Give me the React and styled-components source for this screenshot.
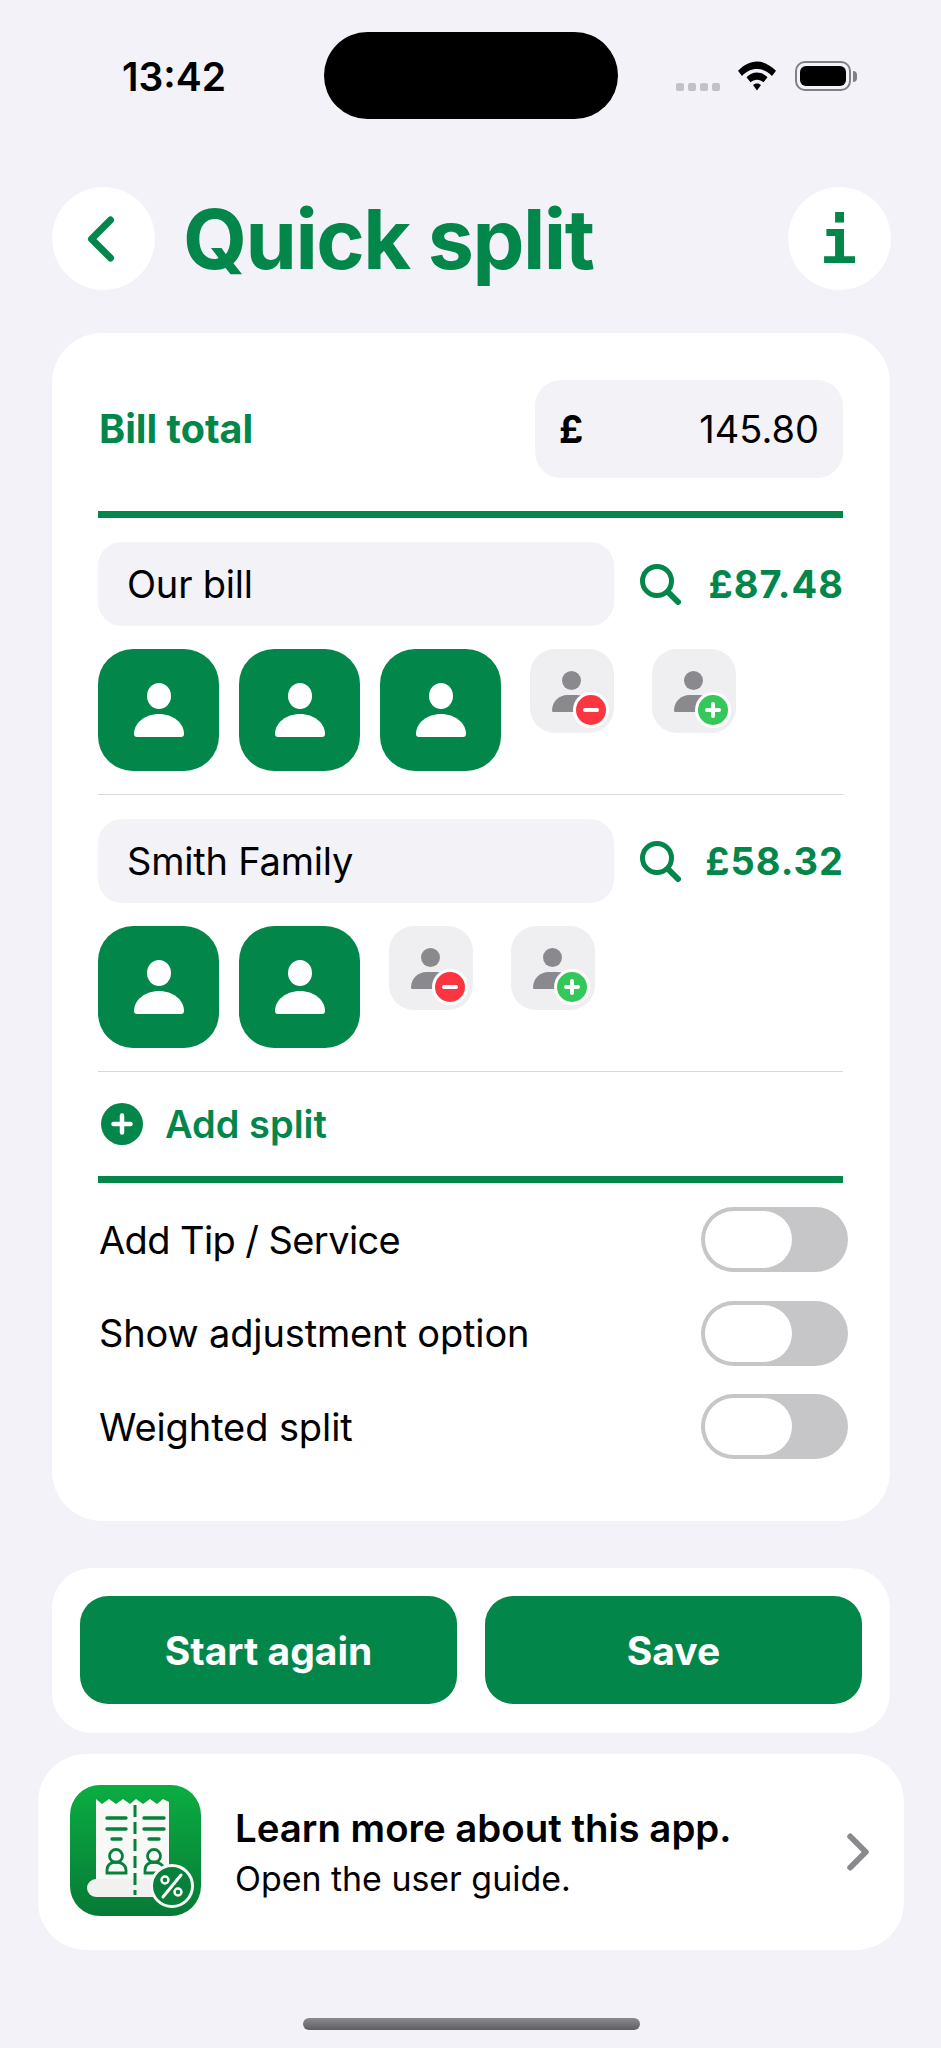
import styled, { createGlobalStyle } from "styled-components";
import { ChevronLeft, ChevronRight } from "lucide-react";

const GREEN = "#03864a";

const splits = [
  { name: "Our bill", amount: "£87.48", people: 3 },
  { name: "Smith Family", amount: "£58.32", people: 2 },
];

const toggles = [
  { label: "Add Tip / Service", tracking: -0.6 },
  { label: "Show adjustment option", tracking: -0.14 },
  { label: "Weighted split", tracking: -0.1 },
];

const App = () => {
  return (
    <Page>
      <GlobalStyle />
      <StatusBar>
        <Time>13:42</Time>
        <Island />
        <StatusIcons>
          <Dots>
            <i />
            <i />
            <i />
            <i />
          </Dots>
          <svg width="40" height="30" viewBox="0 2.500 40 26" preserveAspectRatio="none">
            <path d="M20 3C13 3 7 6 1 11l4 4.500C9.500 11.500 14 9.500 20 9.500s10.500 2 15 6l4-4.500C33 6 27 3 20 3z" />
            <path d="M20 12.500c-4 0-7.500 1.500-10.500 4l4 4.500c2-1.500 4-2.300 6.500-2.300s4.500.8 6.500 2.300l4-4.500c-3-2.500-6.500-4-10.500-4z" />
            <path d="M20 22c-1.800 0-3 .5-4 1.300L20 28l4-4.700c-1-.8-2.200-1.300-4-1.300z" />
          </svg>
          <Battery>
            <BatteryFill />
          </Battery>
          <BatteryCap />
        </StatusIcons>
      </StatusBar>

      <Header>
        <RoundButton>
          <BackIcon size={76} strokeWidth={2.2} color={GREEN} />
        </RoundButton>
        <Title>Quick split</Title>
        <RoundButton>
          <InfoGlyph>i</InfoGlyph>
        </RoundButton>
      </Header>

      <MainCard>
        <BillRow>
          <BillLabel>Bill total</BillLabel>
          <BillInput>
            <Pound>£</Pound>
            <span>145.80</span>
          </BillInput>
        </BillRow>
        <ThickRule $top={33} />

        {splits.map((split) => (
          <Split key={split.name}>
            <SplitTop>
              <NameInput>{split.name}</NameInput>
              <svg width="42" height="42" viewBox="0 0 42 42" fill="none" stroke={GREEN}>
                <circle cx="18" cy="18" r="14.500" strokeWidth="5" />
                <path d="M29 29l10 10" strokeWidth="6" strokeLinecap="round" />
              </svg>
              <Amount>{split.amount}</Amount>
            </SplitTop>
            <People>
              {Array.from({ length: split.people }).map((_, i) => (
                <PersonTile key={i}>
                  <svg width="50" height="54" viewBox="0 0 50 54" fill="#fff">
                    <ellipse cx="25" cy="13" rx="12" ry="13" />
                    <path d="M0 51C0 40 11 31 25 31s25 9 25 20c0 2-1 3-3 3H3c-2 0-3-1-3-3z" />
                  </svg>
                </PersonTile>
              ))}
              <EditTile>
                <GreyPerson />
                <Badge $bg="#fb3640">
                  <BadgeBar />
                </Badge>
              </EditTile>
              <EditTile>
                <GreyPerson />
                <Badge $bg="#34c759">
                  <BadgeBar />
                  <BadgeBar $vertical />
                </Badge>
              </EditTile>
            </People>
          </Split>
        ))}

        <AddSplit>
          <svg width="42" height="42" viewBox="0 0 42 42">
            <circle cx="21" cy="21" r="21" fill={GREEN} />
            <path d="M21 12.500v17M12.500 21h17" stroke="#fff" strokeWidth="4.500" strokeLinecap="round" />
          </svg>
          Add split
        </AddSplit>
        <ThickRule $top={0} />

        <Toggles>
          {toggles.map((row) => (
            <ToggleRow key={row.label} $tracking={row.tracking}>
              <span>{row.label}</span>
              <Toggle>
                <Knob />
              </Toggle>
            </ToggleRow>
          ))}
        </Toggles>
      </MainCard>

      <ActionCard>
        <ActionButton>Start again</ActionButton>
        <ActionButton>Save</ActionButton>
      </ActionCard>

      <GuideCard>
        <AppIcon>
          <svg width="131" height="131" viewBox="0 0 131 131">
            <defs>
              <linearGradient id="iconBg" x1="0" y1="0" x2="0" y2="1">
                <stop offset="0" stopColor="#0bad42" />
                <stop offset="1" stopColor="#067a36" />
              </linearGradient>
            </defs>
            <rect width="131" height="131" rx="30" fill="url(#iconBg)" />
            <path d="M26 14l6 5 7-5 7 5 7-5 7 5 6-5 7 5 7-5 7 5 6-5 6 3v92H26z" fill="#f8f9f7" />
            <rect x="17" y="94" width="87" height="18" rx="9" fill="#f1f2ef" />
            <path d="M65 20v90" stroke="#07803b" strokeWidth="3" strokeDasharray="12 5" />
            <path
              d="M37 33h19M37 44h19M42 54h9M74 33h20M74 44h20M79 54h10"
              stroke="#07803b"
              strokeWidth="3.400"
              strokeLinecap="round"
            />
            <g fill="none" stroke="#07803b" strokeWidth="2.800">
              <circle cx="46" cy="71" r="6.500" />
              <path d="M37 88v-3c0-5 4-8 9-8s10 3 10 8v3z" />
              <circle cx="84" cy="71" r="6.500" />
              <path d="M75 88v-3c0-5 4-8 9-8s10 3 10 8v3z" />
            </g>
            <circle cx="102" cy="101" r="20.500" fill="#07803b" stroke="#f8f9f7" strokeWidth="3" />
            <path d="M93 112l18-22" stroke="#fff" strokeWidth="3" strokeLinecap="round" />
            <circle cx="95" cy="95" r="3.500" fill="none" stroke="#fff" strokeWidth="2.400" />
            <circle cx="108" cy="107" r="3.500" fill="none" stroke="#fff" strokeWidth="2.400" />
          </svg>
        </AppIcon>
        <GuideText>
          <GuideTitle>Learn more about this app.</GuideTitle>
          <GuideSub>Open the user guide.</GuideSub>
        </GuideText>
        <ChevronRight size={62} strokeWidth={2.300} color="#8a8a8e" />
      </GuideCard>

      <HomeBar />
    </Page>
  );
};

const GlobalStyle = createGlobalStyle`
  html, body {
    margin: 0;
    padding: 0;
    background: #f2f2f8;
  }
  * {
    box-sizing: border-box;
  }
`;

const Page = styled.div`
  width: 941px;
  height: 2048px;
  overflow: hidden;
  display: flex;
  flex-direction: column;
  background: #f2f2f8;
  font-family: Inter, "Liberation Sans", sans-serif;
  color: #000;
`;

const StatusBar = styled.div`
  height: 155px;
  padding: 32px 50px 0 122px;
  display: flex;
  align-items: flex-start;
`;

const Time = styled.div`
  width: 202px;
  padding-top: 23px;
  font-size: 39px;
  line-height: 44px;
  font-weight: 600;
`;

const Island = styled.div`
  width: 294px;
  height: 87px;
  border-radius: 44px;
  background: #000;
`;

const StatusIcons = styled.div`
  margin-left: 58px;
  padding-top: 29px;
  display: flex;
  align-items: center;
`;

const Dots = styled.div`
  display: flex;
  gap: 4px;
  margin: 21px 17px 0 0;

  i {
    width: 8px;
    height: 8px;
    border-radius: 2px;
    background: #c2c2c6;
  }
`;

const Battery = styled.div`
  margin-left: 18px;
  width: 56px;
  height: 30px;
  padding: 3px;
  border: 2.500px solid #808084;
  border-radius: 10px;
`;

const BatteryFill = styled.div`
  height: 100%;
  border-radius: 6px;
  background: #000;
`;

const BatteryCap = styled.div`
  width: 4px;
  height: 11px;
  margin-left: 2px;
  border-radius: 0 4px 4px 0;
  background: #808084;
`;

const Header = styled.div`
  height: 103px;
  margin: 32px 50px 0 52px;
  display: flex;
  align-items: center;
`;

const RoundButton = styled.div`
  flex: none;
  width: 103px;
  height: 103px;
  border-radius: 50%;
  background: #fff;
  display: flex;
  align-items: center;
  justify-content: center;
`;

const BackIcon = styled(ChevronLeft)`
  margin-right: 6px;
`;

const InfoGlyph = styled.span`
  font-family: "DejaVu Sans Mono", monospace;
  font-size: 62px;
  font-weight: 700;
  line-height: 1;
  padding: 6px 2px 0 0;
  color: ${GREEN};
`;

const Title = styled.h1`
  flex: 1;
  margin: 0 0 0 28px;
  font-size: 82.500px;
  line-height: 96px;
  font-weight: 700;
  letter-spacing: -1.500px;
  color: ${GREEN};
`;

const MainCard = styled.div`
  width: 838px;
  height: 1188px;
  margin: 43px 0 0 52px;
  padding: 47px 47px 0 46px;
  border-radius: 50px;
  background: #fff;
`;

const BillRow = styled.div`
  height: 98px;
  display: flex;
  align-items: center;
  justify-content: space-between;
`;

const BillLabel = styled.div`
  margin-left: 1px;
  font-size: 39.500px;
  font-weight: 700;
  color: ${GREEN};
`;

const BillInput = styled.div`
  width: 308px;
  height: 98px;
  padding: 0 24px;
  border-radius: 26px;
  background: #f2f2f7;
  display: flex;
  align-items: center;
  justify-content: space-between;
  font-size: 38px;
`;

const Pound = styled.span`
  font-weight: 700;
`;

const ThickRule = styled.div`
  height: 7px;
  background: ${GREEN};
  margin-top: ${(props) => props.$top}px;
`;

const Split = styled.div`
  height: 277px;
  padding-top: 24px;
  border-bottom: 1px solid #d8d8dc;
`;

const SplitTop = styled.div`
  height: 84px;
  display: flex;
  align-items: center;
`;

const NameInput = styled.div`
  width: 516px;
  height: 84px;
  margin-right: 25px;
  padding-left: 29px;
  border-radius: 24px;
  background: #f2f2f7;
  display: flex;
  align-items: center;
  font-size: 38px;
  letter-spacing: -0.200px;
`;

const Amount = styled.div`
  flex: 1;
  margin-right: -1px;
  text-align: right;
  font-size: 38px;
  font-weight: 700;
  letter-spacing: 1px;
  color: ${GREEN};
`;

const People = styled.div`
  margin-top: 23px;
  display: flex;
  align-items: flex-start;
  gap: 20px;
`;

const PersonTile = styled.div`
  width: 121px;
  height: 122px;
  border-radius: 35px;
  background: ${GREEN};
  display: flex;
  align-items: center;
  justify-content: center;
`;

const EditTile = styled.div`
  position: relative;
  width: 84px;
  height: 84px;
  margin-left: 9px;
  margin-right: 9px;
  border-radius: 25px;
  background: #efeff1;
`;

const GreyPerson = styled.div`
  position: absolute;
  left: 22px;
  top: 22px;
  width: 40px;
  height: 41px;

  &::before {
    content: "";
    position: absolute;
    left: 10px;
    top: 0;
    width: 19px;
    height: 19px;
    border-radius: 50%;
    background: #8a8a8e;
  }

  &::after {
    content: "";
    position: absolute;
    left: 0;
    top: 24px;
    width: 40px;
    height: 17px;
    border-radius: 20px 20px 2px 2px;
    background: #8a8a8e;
  }
`;

const Badge = styled.div`
  position: absolute;
  left: 46px;
  top: 46px;
  width: 30px;
  height: 30px;
  border-radius: 50%;
  background: ${(props) => props.$bg};
  box-shadow: 0 0 0 3px #fff;
  display: flex;
  align-items: center;
  justify-content: center;
`;

const BadgeBar = styled.div`
  position: absolute;
  width: ${(props) => (props.$vertical ? 4 : 16)}px;
  height: ${(props) => (props.$vertical ? 16 : 4)}px;
  border-radius: 2px;
  background: #fff;
`;

const AddSplit = styled.div`
  height: 104px;
  padding-left: 3px;
  display: flex;
  align-items: center;
  gap: 22px;
  font-size: 38px;
  font-weight: 600;
  color: ${GREEN};
`;

const Toggles = styled.div`
  padding-top: 24px;
  display: flex;
  flex-direction: column;
  gap: 28.500px;
`;

const ToggleRow = styled.div`
  height: 65px;
  margin-right: -5px;
  padding-left: 1px;
  display: flex;
  align-items: center;
  justify-content: space-between;
  font-size: 38px;
  letter-spacing: ${(props) => props.$tracking}px;
`;

const Toggle = styled.div`
  width: 147px;
  height: 65px;
  padding: 4px;
  border-radius: 33px;
  background: #c6c6c8;
`;

const Knob = styled.div`
  width: 87px;
  height: 57px;
  border-radius: 29px;
  background: #fff;
`;

const ActionCard = styled.div`
  width: 838px;
  height: 165px;
  margin: 47px 0 0 52px;
  padding: 28px;
  border-radius: 40px;
  background: #fff;
  display: flex;
  gap: 28px;
`;

const ActionButton = styled.div`
  flex: 1;
  height: 108px;
  border-radius: 28px;
  background: ${GREEN};
  display: flex;
  align-items: center;
  justify-content: center;
  font-size: 39px;
  font-weight: 700;
  color: #fff;
`;

const GuideCard = styled.div`
  width: 866px;
  height: 196px;
  margin: 21px 0 0 38px;
  padding: 0 15px 0 32px;
  border-radius: 48px;
  background: #fff;
  display: flex;
  align-items: center;
`;

const AppIcon = styled.div`
  flex: none;
  width: 131px;
  height: 131px;
  margin-bottom: 3px;
  display: flex;
`;

const GuideText = styled.div`
  flex: 1;
  margin-left: 34px;
`;

const GuideTitle = styled.div`
  font-size: 38.400px;
  line-height: 48px;
  font-weight: 600;
`;

const GuideSub = styled.div`
  margin-top: 5px;
  font-size: 33.900px;
  line-height: 44px;
`;

const HomeBar = styled.div`
  width: 337px;
  height: 12px;
  margin: 68px 0 0 303px;
  border-radius: 6px;
  background: linear-gradient(#8b8b8f, #5f5f63);
`;

export default App;
